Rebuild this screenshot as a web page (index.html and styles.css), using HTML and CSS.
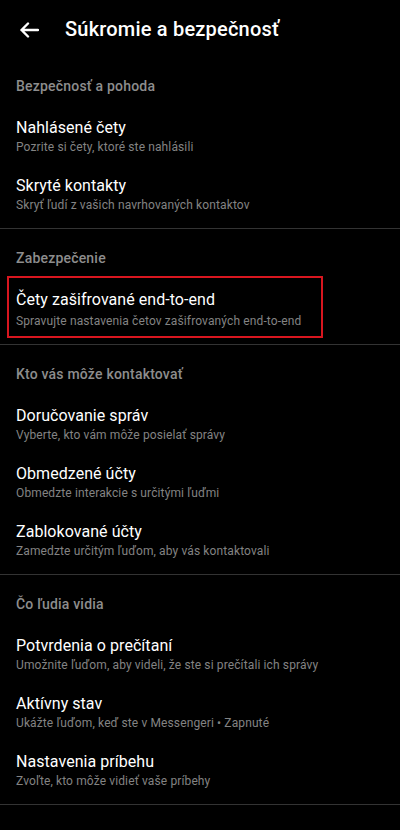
FILE: index.html
```html
<!DOCTYPE html>
<html lang="sk">
<head>
<meta charset="utf-8">
<link rel="stylesheet" href="styles.css">
</head>
<body>
<div class="screen">
  <header class="topbar">
    <span class="back">
      <svg width="20" height="16" viewBox="0 0 20 16"><path d="M19 8H2.5M9 1.5L2.5 8L9 14.5" fill="none" stroke="#fff" stroke-width="2.4" stroke-linecap="round" stroke-linejoin="round"/></svg>
    </span>
    <h1 class="title">Súkromie a bezpečnosť</h1>
  </header>

  <section class="section first">
    <div class="label">Bezpečnosť a pohoda</div>
    <div class="item"><div class="t">Nahlásené čety</div><div class="s">Pozrite si čety, ktoré ste nahlásili</div></div>
    <div class="item"><div class="t">Skryté kontakty</div><div class="s">Skryť ľudí z vašich navrhovaných kontaktov</div></div>
  </section>

  <section class="section">
    <div class="label short">Zabezpečenie</div>
    <div class="item boxed"><div class="t">Čety zašifrované end-to-end</div><div class="s">Spravujte nastavenia četov zašifrovaných end-to-end</div></div>
  </section>

  <section class="section">
    <div class="label">Kto vás môže kontaktovať</div>
    <div class="item"><div class="t">Doručovanie správ</div><div class="s">Vyberte, kto vám môže posielať správy</div></div>
    <div class="item"><div class="t">Obmedzené účty</div><div class="s">Obmedzte interakcie s určitými ľuďmi</div></div>
    <div class="item"><div class="t">Zablokované účty</div><div class="s">Zamedzte určitým ľuďom, aby vás kontaktovali</div></div>
  </section>

  <section class="section">
    <div class="label">Čo ľudia vidia</div>
    <div class="item"><div class="t">Potvrdenia o prečítaní</div><div class="s">Umožnite ľuďom, aby videli, že ste si prečítali ich správy</div></div>
    <div class="item"><div class="t">Aktívny stav</div><div class="s">Ukážte ľuďom, keď ste v Messengeri • Zapnuté</div></div>
    <div class="item"><div class="t">Nastavenia príbehu</div><div class="s">Zvoľte, kto môže vidieť vaše príbehy</div></div>
  </section>
</div>
</body>
</html>
```
FILE: styles.css
```css
* { box-sizing: border-box; }
html, body { margin: 0; padding: 0; background: #000; }
body { font-family: Roboto, "Noto Sans", "Liberation Sans", sans-serif; color: #fff; }
.screen { width: 400px; min-height: 830px; background: #000; }

.topbar { height: 58px; display: flex; align-items: center; }
.back { width: 65px; display: flex; justify-content: center; padding-right: 8px; padding-top: 1px; }
.back svg { display: block; }
.title { margin: 0; font-size: 20px; font-weight: 500; line-height: 24px; color: #fff; letter-spacing: 0.2px; }

.section { padding: 19px 0 5px; border-bottom: 1px solid #333; }
.section.first { padding-top: 18px; }

.label { padding: 0 16px; font-size: 14px; font-weight: 500; line-height: 20px; color: #8d8d8d; margin-bottom: 11px; letter-spacing: 0.2px; }
.label.short { margin-bottom: 8px; }

.item { padding: 11px 16px 9px; }
.t { font-size: 16px; line-height: 20px; color: #fff; letter-spacing: 0.05px; }
.s { font-size: 12px; line-height: 18px; color: #838383; letter-spacing: 0.12px; }

.item.boxed { margin: 0 77px 1px 7px; border: 2px solid #d8161f; padding: 12px 7px 6px; }
.item.boxed .s { margin-top: 2px; }
```
